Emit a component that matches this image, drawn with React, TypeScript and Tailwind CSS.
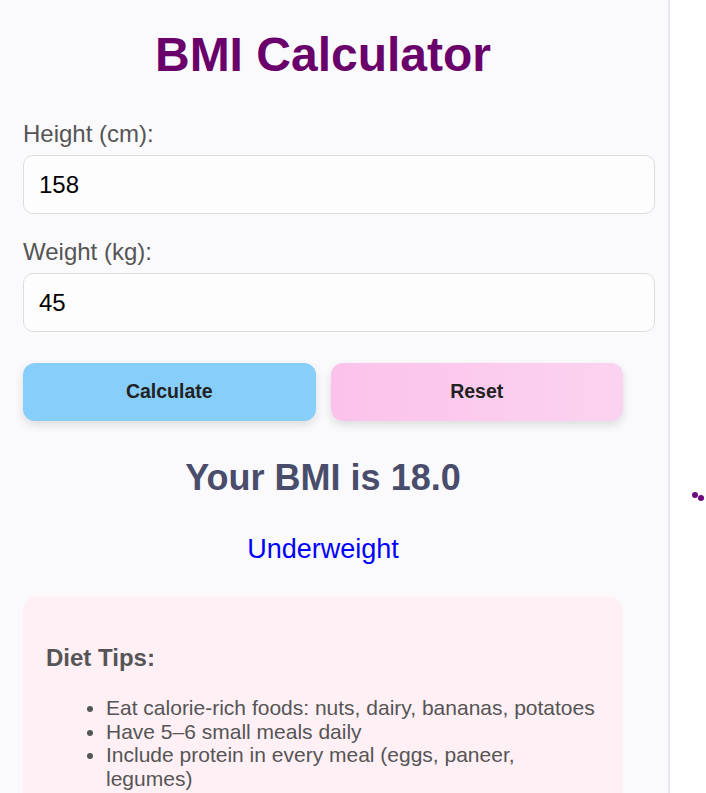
import React, { useState } from 'react';

const tips = [
  'Eat calorie-rich foods: nuts, dairy, bananas, potatoes',
  'Have 5–6 small meals daily',
  'Include protein in every meal (eggs, paneer, legumes)',
];

const App = () => {
  const [height, setHeight] = useState('158');
  const [weight, setWeight] = useState('45');

  return (
    <div className="min-h-screen flex bg-white overflow-hidden" style={{ fontFamily: '"Liberation Sans", Arial, sans-serif' }}>
      {/* Calculator panel */}
      <div className="w-[670px] shrink-0 bg-[#fafafc] border-r-2 border-[#e6e6fa] pl-[23px] pt-[27px]">
        <div className="w-[600px]">
          <h1 className="text-center text-[48px] leading-[55px] font-bold text-[#6a016b]">BMI Calculator</h1>

          <label className="block mt-[38px] mb-[7px] text-[24px] leading-[28px] text-[#555]">Height (cm):</label>
          <input
            value={height}
            onChange={(e) => setHeight(e.target.value)}
            className="block w-[632px] max-w-none h-[59px] px-[15px] text-[24px] text-black bg-[#fdfdfd] border border-[#dddddd] rounded-[10px] outline-none"
          />

          <label className="block mt-[24px] mb-[7px] text-[24px] leading-[28px] text-[#555]">Weight (kg):</label>
          <input
            value={weight}
            onChange={(e) => setWeight(e.target.value)}
            className="block w-[632px] max-w-none h-[59px] px-[15px] text-[24px] text-black bg-[#fdfdfd] border border-[#dddddd] rounded-[10px] outline-none"
          />

          <div className="flex gap-[15px] mt-[31px]">
            <button className="flex-1 h-[58px] rounded-[12px] bg-[#87cefa] text-[#222] text-[19.5px] font-bold shadow-[0_4px_10px_rgba(0,0,0,0.12)]">
              Calculate
            </button>
            <button className="flex-1 h-[58px] rounded-[12px] bg-linear-to-r from-[#fbc2eb] to-[#fbd3f0] text-[#222] text-[19.5px] font-bold shadow-[0_4px_10px_rgba(0,0,0,0.12)]">
              Reset
            </button>
          </div>

          <h2 className="mt-[36px] text-center text-[36px] leading-[41px] font-bold text-[#494d6b]">Your BMI is 18.0</h2>
          <p className="mt-[36px] text-center text-[27px] leading-[31px] text-[#0000ff]">Underweight</p>

          {/* Diet tips */}
          <div className="mt-[31px] bg-[#fff0f5] rounded-[15px] pt-[48px] pb-[24px] pl-[23px] pr-[22px]">
            <h3 className="text-[24px] leading-[28px] font-bold text-[#555]">Diet Tips:</h3>
            <ul className="mt-[24px] pl-[60px] list-disc text-[21px] leading-[23.7px] text-[#555]">
              {tips.map((tip) => (
                <li key={tip}>{tip}</li>
              ))}
            </ul>
          </div>
        </div>
      </div>

      {/* Right side with loading dots */}
      <div className="relative flex-1">
        <span className="absolute left-[22px] top-[492px] w-[6px] h-[6px] rounded-full bg-[#6a0a7e]"></span>
        <span className="absolute left-[28px] top-[495px] w-[6px] h-[6px] rounded-full bg-[#6a0a7e]"></span>
      </div>
    </div>
  );
};

export default App;
